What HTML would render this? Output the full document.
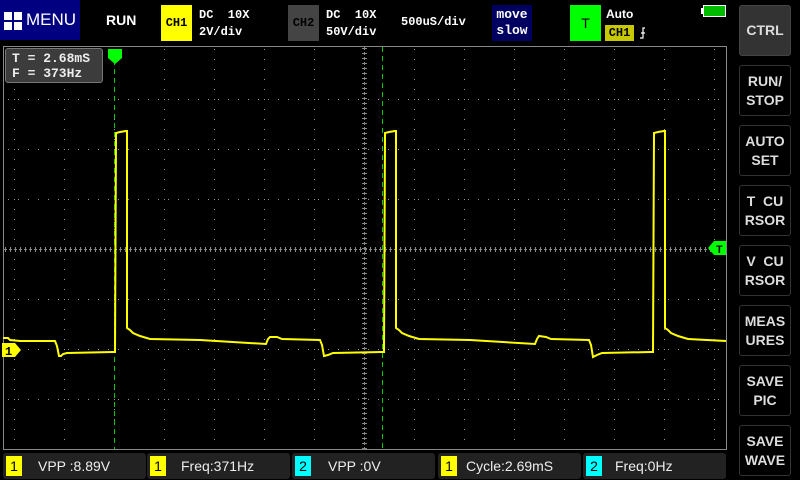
<!DOCTYPE html>
<html><head><meta charset="utf-8"><style>
*{margin:0;padding:0;box-sizing:border-box}
body{width:800px;height:480px;background:#000;overflow:hidden;position:relative;font-family:"Liberation Mono",monospace;color:#fff}
.a{position:absolute}
.t{font-size:12px;font-weight:bold;line-height:14px}
.btn{position:absolute;left:739px;width:52px;height:51px;border:1px solid #333;border-radius:3px;color:#ddd;font-family:"Liberation Sans",sans-serif;font-size:14px;font-weight:bold;text-align:center;display:flex;align-items:center;justify-content:center;line-height:19px}
.m{position:absolute;top:453px;height:26px;background:#222;border-radius:3px;font-family:"Liberation Sans",sans-serif;font-size:14px;color:#eee;line-height:26px}
.bd{position:absolute;left:3px;top:3px;width:16px;height:20px;color:#000;text-align:center;line-height:20px;font-size:14px}
</style></head><body>
<div class="a" style="left:0;top:0;width:80px;height:40px;background:#000080"></div>
<svg class="a" style="left:4px;top:12px" width="18" height="18"><rect x="0" y="0" width="8" height="8" fill="#fff"/><rect x="10" y="0" width="8" height="8" fill="#fff"/><rect x="0" y="10" width="8" height="8" fill="#fff"/><rect x="10" y="10" width="8" height="8" fill="#fff"/></svg>
<div class="a" style="left:26px;top:10px;font-family:'Liberation Sans',sans-serif;font-size:17px;line-height:20px">MENU</div>
<div class="a" style="left:106px;top:12px;font-family:'Liberation Sans',sans-serif;font-size:14px;font-weight:bold">RUN</div>
<div class="a" style="left:161px;top:5px;width:31px;height:36px;background:#ff0;color:#000;font-size:12px;font-weight:bold;text-align:center;line-height:36px">CH1</div>
<div class="a t" style="left:199px;top:8px">DC&nbsp;&nbsp;10X<br><span style="position:relative;top:3px">2V/div</span></div>
<div class="a" style="left:288px;top:5px;width:31px;height:36px;background:#444;color:#000;font-size:12px;font-weight:bold;text-align:center;line-height:36px">CH2</div>
<div class="a t" style="left:326px;top:8px">DC&nbsp;&nbsp;10X<br><span style="position:relative;top:3px">50V/div</span></div>
<div class="a t" style="left:401px;top:15px">500uS/div</div>
<div class="a" style="left:492px;top:5px;width:40px;height:36px;background:#000060;font-size:13px;font-weight:bold;text-align:center;line-height:16px;padding-top:2px">move<br>slow</div>
<div class="a" style="left:570px;top:5px;width:31px;height:36px;background:#0f0;color:#000;font-family:'Liberation Sans',sans-serif;font-size:14px;text-align:center;line-height:36px">T</div>
<div class="a t" style="left:606px;top:7px;font-family:'Liberation Sans',sans-serif">Auto</div>
<div class="a" style="left:605px;top:25px;width:29px;height:16px;background:#c8c800;color:#000;font-size:12px;font-weight:bold;text-align:center;line-height:16px">CH1</div>
<svg class="a" style="left:639px;top:27px" width="8" height="12"><path d="M6 1H4V11H1M2 6H6" stroke="#fff" stroke-width="1.2" fill="none"/></svg>
<div class="a" style="left:703px;top:5px;width:23px;height:12px;border:1px solid #fff;background:#0b0"></div>
<div class="a" style="left:701px;top:8px;width:2px;height:6px;background:#fff"></div>

<svg class="a" style="left:0;top:0" width="800" height="480">
<rect x="3.5" y="46.5" width="723" height="403" fill="none" stroke="#888" stroke-width="1"/>
<g stroke="#999" stroke-width="1" stroke-dasharray="1 9">
<path d="M14.5 49V449M64.5 49V449M114.5 49V449M164.5 49V449M214.5 49V449M264.5 49V449M314.5 49V449M414.5 49V449M464.5 49V449M514.5 49V449M564.5 49V449M614.5 49V449M664.5 49V449M714.5 49V449"/>
<path d="M4 99.5H726M4 149.5H726M4 199.5H726M4 299.5H726M4 349.5H726M4 399.5H726" stroke-dashoffset="-4"/>
</g>
<g stroke="#888" stroke-width="1">
<path d="M4 249.5H726M364.5 47V449" stroke-dasharray="3 2"/>
<path d="M4 249.5H726" stroke-width="5" stroke-dasharray="1 4" stroke-dashoffset="-1"/>
<path d="M364.5 47V449" stroke-width="5" stroke-dasharray="1 4" stroke-dashoffset="-1"/>
</g>
<g stroke="#0c0" stroke-width="1" stroke-dasharray="5 4"><path d="M114.5 60V449M382.5 47V449"/></g>
<path d="M108 49H122V58L115 64L108 58Z" fill="#0f0"/>
<polyline fill="none" stroke="#ff0" stroke-width="2" points="3,338 8,338 10,340 20,341 55,341 57,346 59,356 61,356 63,354 67,353 113,352 115,352 116,133 120,132 126,131 127,131 127,328 130,330 133,333 140,336 150,339 200,340 266,344 268,339 270,337 277,337 282,339 320,340 322,345 324,356 328,355 333,353 382,352 384,352 385,133 389,132 395,131 396,131 396,328 399,330 402,333 409,336 419,339 470,340 535,344 537,339 539,336 546,337 551,339 589,340 591,345 593,357 597,355 602,353 651,352 653,352 654,133 658,132 664,131 665,131 665,328 668,330 671,333 678,336 688,339 726,341"/>
<path d="M2 343H15L21 350L15 357H2Z" fill="#ff0"/>
<text x="5" y="355" font-family="Liberation Mono" font-weight="bold" font-size="12" fill="#000">1</text>
<path d="M726 241H714L708 248L714 255H726Z" fill="#0f0"/>
<text x="716" y="253" font-family="Liberation Sans" font-weight="bold" font-size="11" fill="#000">T</text>
</svg>
<div class="a" style="left:5px;top:48px;width:98px;height:35px;background:#3c3c3c;border:1px solid #777;border-radius:3px;font-size:13px;line-height:15px;padding:2px 0 0 6px;color:#eee;font-weight:bold">T = 2.68mS<br>F = 373Hz</div>

<div class="btn" style="top:5px;background:#333;border-color:#444">CTRL</div>
<div class="btn" style="top:65px">RUN/<br>STOP</div>
<div class="btn" style="top:125px">AUTO<br>SET</div>
<div class="btn" style="top:185px">T&nbsp; CU<br>RSOR</div>
<div class="btn" style="top:245px">V&nbsp; CU<br>RSOR</div>
<div class="btn" style="top:305px">MEAS<br>URES</div>
<div class="btn" style="top:365px">SAVE<br>PIC</div>
<div class="btn" style="top:425px">SAVE<br>WAVE</div>

<div class="m" style="left:3px;width:143px"><div class="bd" style="background:#ff0">1</div><span style="position:absolute;left:35px">VPP :8.89V</span></div>
<div class="m" style="left:147px;width:143px"><div class="bd" style="background:#ff0">1</div><span style="position:absolute;left:34px">Freq:371Hz</span></div>
<div class="m" style="left:292px;width:143px"><div class="bd" style="background:#0ff">2</div><span style="position:absolute;left:36px">VPP :0V</span></div>
<div class="m" style="left:438px;width:143px"><div class="bd" style="background:#ff0">1</div><span style="position:absolute;left:28px">Cycle:2.69mS</span></div>
<div class="m" style="left:583px;width:143px"><div class="bd" style="background:#0ff">2</div><span style="position:absolute;left:32px">Freq:0Hz</span></div>
</body></html>
